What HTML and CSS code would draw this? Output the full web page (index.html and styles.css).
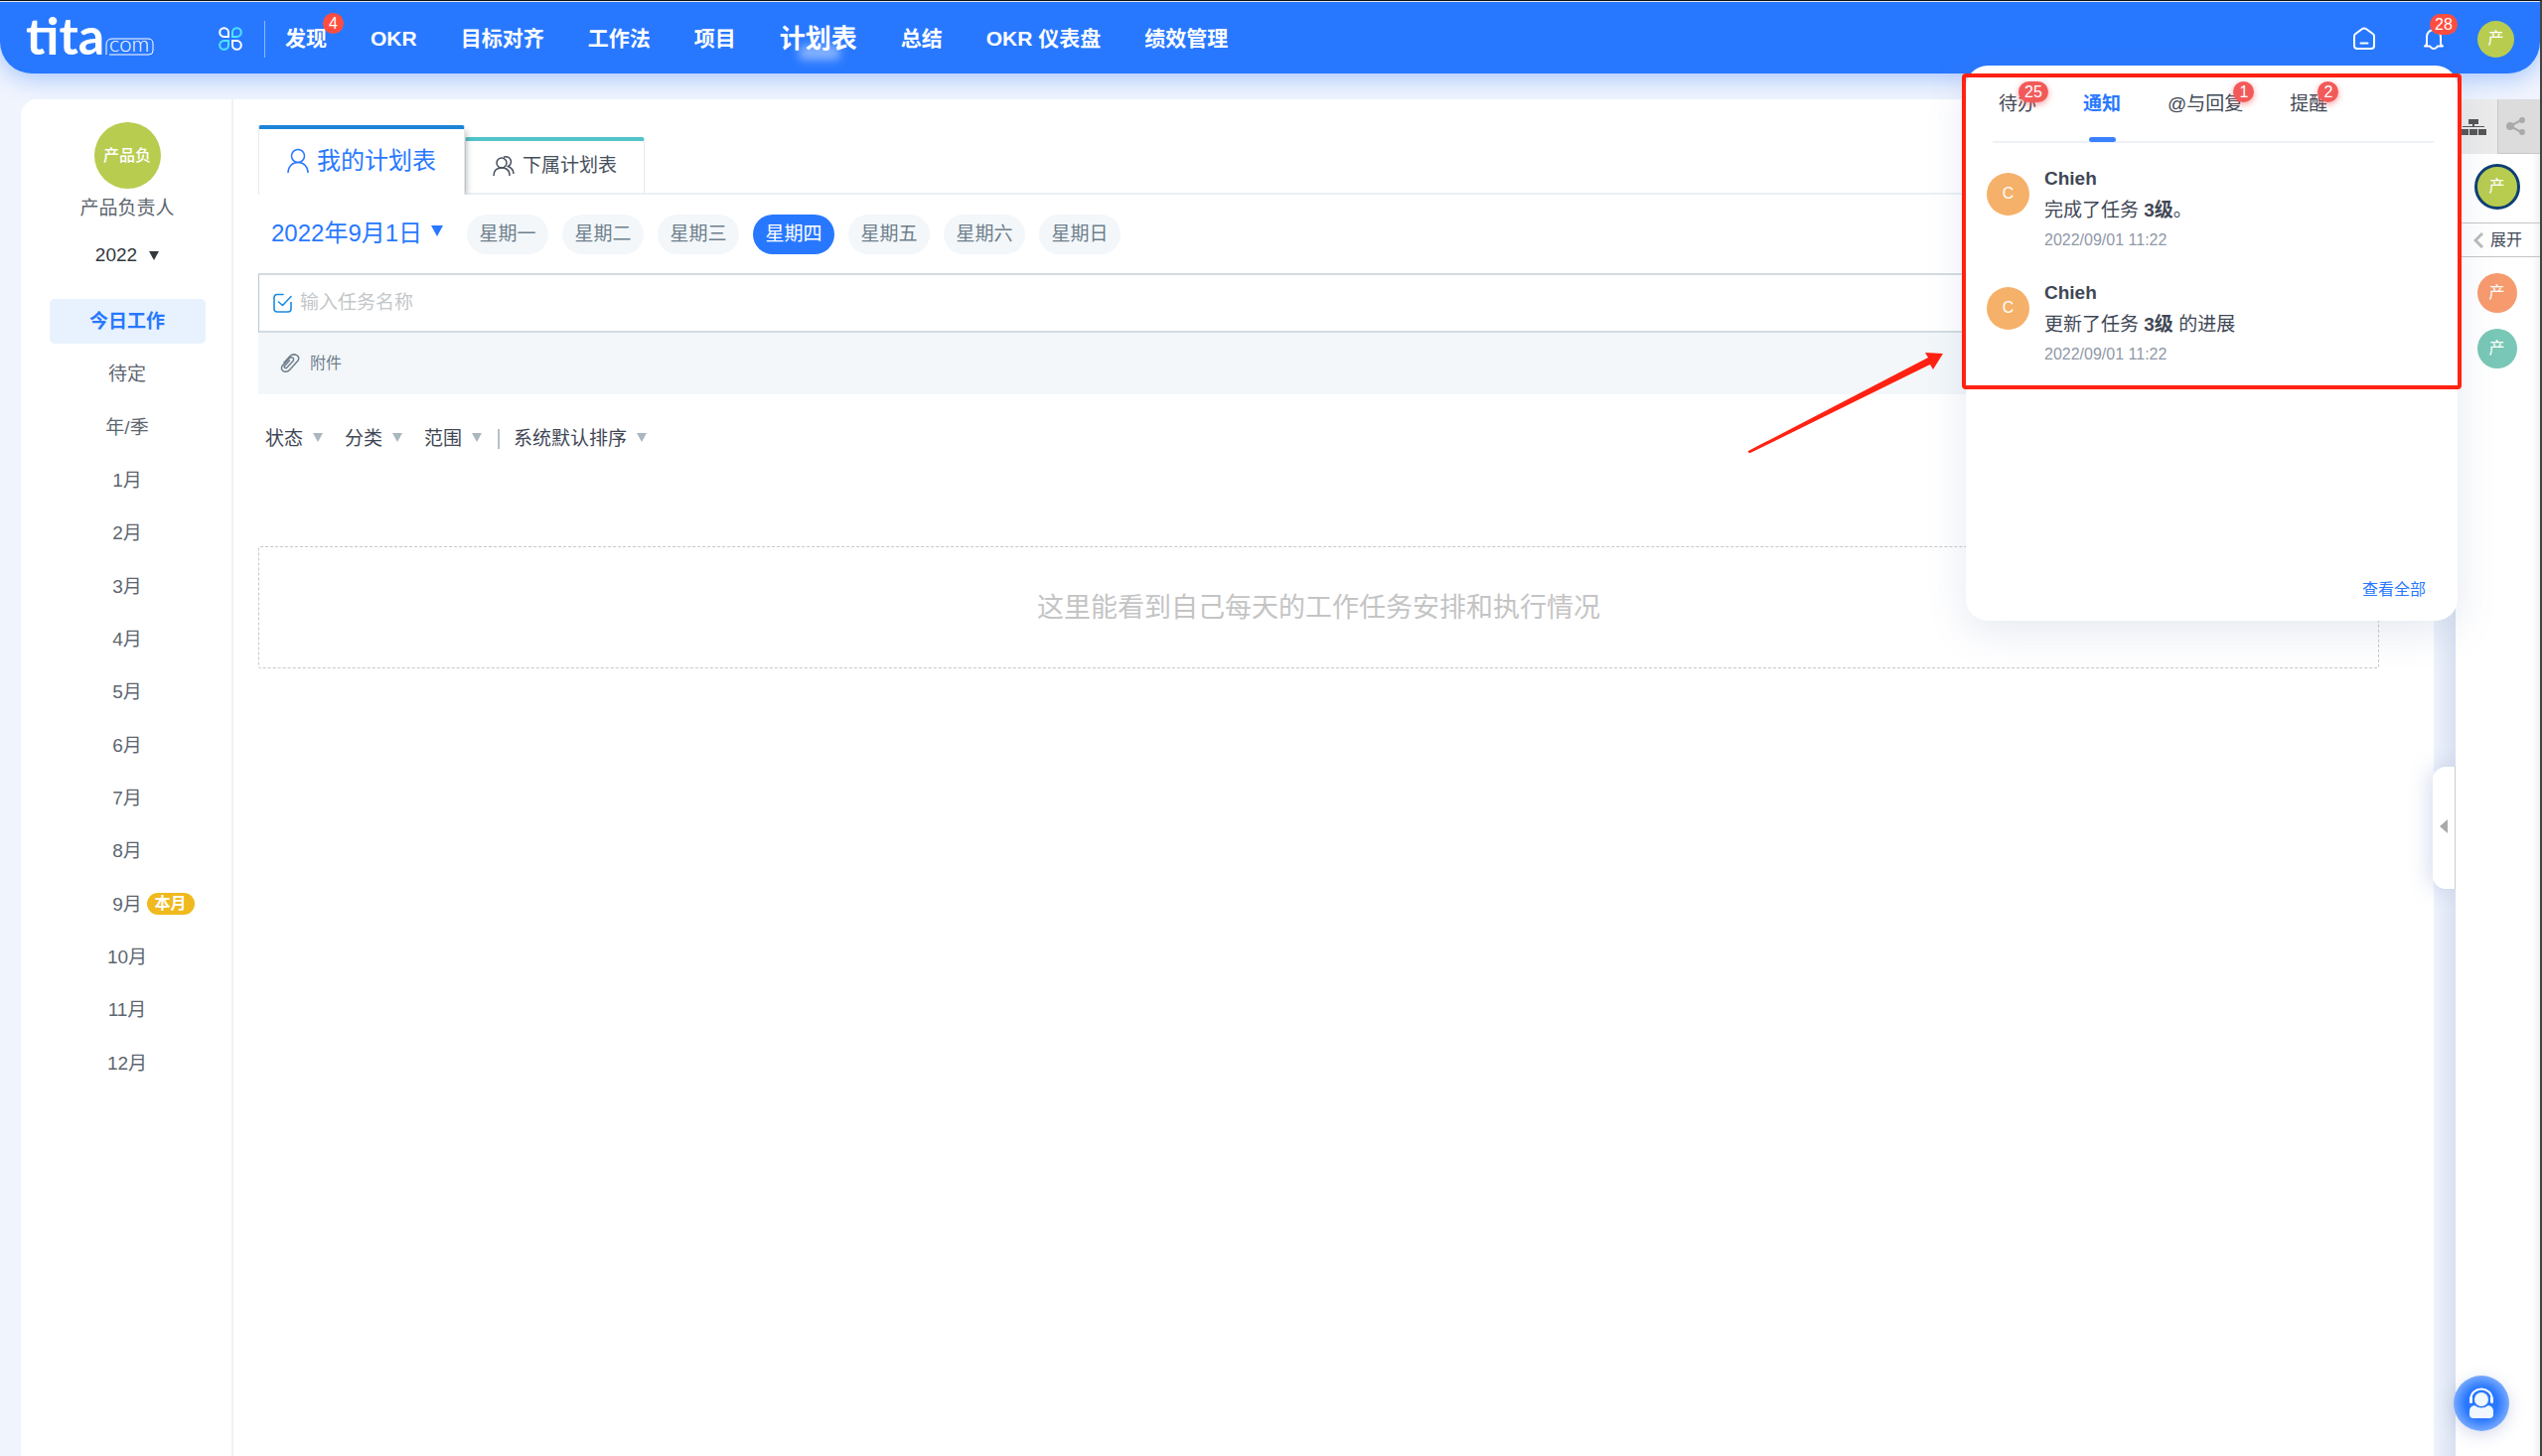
FILE: index.html
```html
<!DOCTYPE html>
<html lang="zh-CN">
<head>
<meta charset="utf-8">
<title>计划表 - Tita</title>
<link rel="stylesheet" href="styles.css">
</head>
<body>
<header class="topbar">
  <a class="logo" href="#" aria-label="tita.com">
    <svg width="132" height="60" viewBox="0 0 132 60">
      <text x="0" y="46" class="logo-main">tita</text>
      <path d="M81 46V36q0-6 6-6h36q5 0 5 5v7q0 4-4 4H84" fill="none" stroke="#fff" stroke-width="1"/>
      <text x="84" y="43" class="logo-com">com</text>
    </svg>
  </a>
  <button class="apps" aria-label="应用">
    <svg width="24" height="24" viewBox="0 0 24 24" fill="none" stroke-width="2">
      <path d="M10 10H5.500a4.400 4.400 0 1 1 4.500-4.500z" stroke="#fff"/>
      <path d="M14 10h4.500a4.400 4.400 0 1 0-4.500-4.500z" stroke="#4fe3ff"/>
      <path d="M10 14H5.500a4.400 4.400 0 1 0 4.500 4.500z" stroke="#4fe3ff"/>
      <path d="M14 14h4.500a4.400 4.400 0 1 1-4.500 4.500z" stroke="#fff"/>
    </svg>
  </button>
  <nav class="mainnav">
    <a href="#">发现<span class="badge">4</span></a>
    <a href="#">OKR</a>
    <a href="#">目标对齐</a>
    <a href="#">工作法</a>
    <a href="#">项目</a>
    <a href="#" class="current">计划表</a>
    <a href="#">总结</a>
    <a href="#">OKR 仪表盘</a>
    <a href="#">绩效管理</a>
  </nav>
  <div class="tools">
    <button aria-label="主页">
      <svg width="24" height="24" viewBox="0 0 24 24" fill="none" stroke="#fff" stroke-width="2" stroke-linecap="round" stroke-linejoin="round"><path d="M2 9.500Q2 8 3 7.200L10.500 1.800Q12 1 13.500 1.800L21 7.200Q22 8 22 9.500V19q0 3-3 3H5q-3 0-3-3zM8.500 16.500h7"/></svg>
    </button>
    <button aria-label="消息">
      <svg width="24" height="24" viewBox="0 0 24 24" fill="none" stroke="#fff" stroke-width="2" stroke-linecap="round" stroke-linejoin="round"><path d="M5 19V10a7 7 0 0 1 14 0v6q0 3 2 3.500h-5l-1.500 1.500q-2.500 2-5 0L8 19.500H3q2-.500 2-3.500"/></svg>
      <span class="badge">28</span>
    </button>
    <span class="avatar green">产</span>
  </div>
</header>

<div class="page">
  <aside class="side">
    <span class="avatar green large">产品负</span>
    <p class="username">产品负责人</p>
    <button class="year">2022<i class="tri"></i></button>
    <ul class="periods">
      <li><a class="today" href="#">今日工作</a></li>
      <li><a href="#">待定</a></li>
      <li><a href="#">年/季</a></li>
      <li><a href="#">1月</a></li>
      <li><a href="#">2月</a></li>
      <li><a href="#">3月</a></li>
      <li><a href="#">4月</a></li>
      <li><a href="#">5月</a></li>
      <li><a href="#">6月</a></li>
      <li><a href="#">7月</a></li>
      <li><a href="#">8月</a></li>
      <li><a href="#">9月<span class="now">本月</span></a></li>
      <li><a href="#">10月</a></li>
      <li><a href="#">11月</a></li>
      <li><a href="#">12月</a></li>
    </ul>
  </aside>

  <main class="main">
    <div class="tabs">
      <button class="tab active">
        <svg width="22" height="26" viewBox="0 0 22 26" fill="none" stroke="currentColor" stroke-width="1.500"><circle cx="11" cy="8" r="6.500"/><path d="M1 25c0-6 4-10.500 10-10.500S21 19 21 25"/></svg>
        我的计划表
      </button>
      <button class="tab">
        <svg width="22" height="22" viewBox="0 0 22 22" fill="none" stroke="currentColor" stroke-width="1.500"><circle cx="9" cy="8" r="5"/><path d="M1 21c0-5 3-8 8-8s8 3 8 8M11 2.200a5 5 0 1 1 4.500 9.300c3.500 1.500 5.500 4 5.500 7.500"/></svg>
        下属计划表
      </button>
    </div>
    <div class="dates">
      <button class="date">2022年9月1日<i class="tri"></i></button>
      <div class="days">
        <button>星期一</button>
        <button>星期二</button>
        <button>星期三</button>
        <button class="on">星期四</button>
        <button>星期五</button>
        <button>星期六</button>
        <button>星期日</button>
      </div>
    </div>
    <div class="newtask">
      <label class="taskfield">
        <svg width="20" height="20" viewBox="0 0 20 20" fill="none" stroke="#1c8be0" stroke-width="1.600" stroke-linecap="round" stroke-linejoin="round"><path d="M10 1.500H4Q1 1.500 1 4.500V16q0 3 3 3h11q3 0 3-3V9.500M5.500 9l4 3.500L18 3.500"/></svg>
        <input type="text" placeholder="输入任务名称" aria-label="输入任务名称">
      </label>
      <button class="attach">
        <svg width="20" height="20" viewBox="0 0 20 20" fill="none" stroke="currentColor" stroke-width="1.500" stroke-linecap="round"><path d="M4 9l6-6.500c4-3.500 11-.500 8 4.500l-8 9c-4 4.500-10.500 1.500-8-3.500l7-7.500c2.500-2.500 6-.500 4 2.500l-6 6.500c-1.500 1.500-3.500 0-2.500-1.500l5-5.500"/></svg>
        附件
      </button>
    </div>
    <div class="filters">
      <button>状态<i class="tri"></i></button>
      <button>分类<i class="tri"></i></button>
      <button>范围<i class="tri"></i></button>
      <span class="bar"></span>
      <button>系统默认排序<i class="tri"></i></button>
    </div>
    <p class="empty">这里能看到自己每天的工作任务安排和执行情况</p>
  </main>

  <div class="gutter"><button class="handle" aria-label="展开面板"><i class="tri"></i></button></div>

  <aside class="people">
    <div class="switch">
      <button aria-label="组织架构">
        <svg width="26" height="18" viewBox="0 0 26 18" fill="#555"><path d="M8 1h10v5h-4v2h10v1H2V8h10V6H8zM0 11h8v6H0zM9 11h8v6H9zM18 11h8v6h-8z"/></svg>
      </button>
      <button class="off" aria-label="分享">
        <svg width="20" height="20" viewBox="0 0 20 20" fill="#aaa" stroke="#aaa" stroke-width="2"><path d="M4 10l11-6M4 10l11 6" fill="none"/><circle cx="4" cy="10" r="3"/><circle cx="16" cy="4" r="2"/><circle cx="16" cy="16" r="2"/></svg>
      </button>
    </div>
    <span class="avatar green ring">产</span>
    <button class="expand">
      <svg width="10" height="16" viewBox="0 0 10 16" fill="none" stroke="#bbb" stroke-width="3"><path d="M9 1L2 8l7 7"/></svg>
      展开
    </button>
    <span class="avatar orange">产</span>
    <span class="avatar teal">产</span>
  </aside>
</div>

<section class="popup" aria-label="通知">
  <div class="poptabs">
    <button>待办<span class="badge wide">25</span></button>
    <button class="on">通知</button>
    <button>@与回复<span class="badge">1</span></button>
    <button>提醒<span class="badge">2</span></button>
  </div>
  <article class="notice">
    <span class="avatar amber">C</span>
    <div>
      <h3>Chieh</h3>
      <p>完成了任务 <b>3级</b>。</p>
      <time>2022/09/01 11:22</time>
    </div>
  </article>
  <article class="notice">
    <span class="avatar amber">C</span>
    <div>
      <h3>Chieh</h3>
      <p>更新了任务 <b>3级</b> 的进展</p>
      <time>2022/09/01 11:22</time>
    </div>
  </article>
  <a class="all" href="#">查看全部</a>
  <div class="frame"></div>
  <svg class="arrow" width="200" height="104" viewBox="0 0 200 104"><path d="M1 101L182 7l-3-5 18 1-10 16-3-5L3 103Q0 103 1 101z" fill="#ff2212"/></svg>
</section>

<button class="support" aria-label="在线客服">
  <svg width="26" height="32" viewBox="0 0 26 32" fill="#f1f7ff"><circle cx="13" cy="12" r="7"/><path d="M6 18q7 5 14 0 5 1 5 6v3q0 4-4 4H5q-4 0-4-4v-3q0-5 5-6z"/><path d="M2.500 11a10.500 9.500 0 0 1 21 0" fill="none" stroke="#fff" stroke-width="2"/><rect x="1" y="9" width="3" height="7" rx="1.500"/><rect x="22" y="9" width="3" height="7" rx="1.500"/></svg>
</button>
</body>
</html>
```
FILE: styles.css
```css
* { box-sizing: border-box; }
body {
  margin: 0;
  min-height: 100vh;
  display: flex;
  flex-direction: column;
  position: relative;
  background: #f0f4fd;
  border-top: 1px solid #111;
  border-right: 2px solid #444;
  font: 19px/28px "Liberation Sans", "Noto Sans CJK SC", sans-serif;
  color: #3f4755;
}
button {
  display: flex;
  align-items: center;
  border: 0;
  padding: 0;
  background: none;
  font: inherit;
  color: inherit;
  white-space: nowrap;
}
a { color: inherit; text-decoration: none; }
p, h3, ul { margin: 0; padding: 0; }
svg { display: block; flex: none; }

.tri {
  border: 5px solid transparent;
  border-top: 9px solid currentColor;
  border-bottom: 0;
}
.avatar {
  display: flex;
  align-items: center;
  justify-content: center;
  flex: none;
  width: 40px;
  height: 40px;
  border-radius: 50%;
  color: #fff;
  font-size: 16px;
}
.green { background: #b8cc50; }
.orange { background: #f79b6e; }
.teal { background: #79c7b6; }
.amber { background: #f5b169; width: 43px; height: 43px; }
.badge {
  position: absolute;
  min-width: 21px;
  height: 21px;
  padding: 0 5px;
  border-radius: 11px;
  background: #ff4d40;
  color: #fff;
  font-size: 16px;
  font-weight: 400;
  line-height: 21px;
  text-align: center;
}

/* top bar */
.topbar {
  display: flex;
  align-items: center;
  height: 73px;
  padding: 2px 26px 0;
  border-top: 1px solid #dfe6f5;
  border-radius: 0 0 32px 32px;
  background: #2878ff;
  box-shadow: 0 4px 24px rgba(40, 120, 255, .4);
}
.logo-main { font: 700 52px Lato, sans-serif; fill: #fff; }
.logo-com { font: 300 22px Lato, sans-serif; fill: #fff; }
.apps { margin-left: 62px; }
.mainnav {
  display: flex;
  align-items: center;
  gap: 44px;
  margin-left: 22px;
  padding-left: 20px;
  height: 37px;
  border-left: 1px solid #8db8ff;
  color: #fff;
  font-size: 21px;
  font-weight: 700;
  white-space: nowrap;
}
.mainnav a { position: relative; }
.mainnav .badge { left: 38px; top: -12px; }
.mainnav .current { font-size: 26px; }
.mainnav .current::after {
  content: "";
  position: absolute;
  left: 20px;
  right: 18px;
  bottom: -7px;
  height: 14px;
  background: rgba(255, 255, 255, .45);
  filter: blur(5px);
}
.tools {
  display: flex;
  align-items: center;
  gap: 46px;
  margin-left: auto;
}
.tools button { position: relative; }
.tools .badge { left: 8px; top: -13px; }
.tools .avatar { width: 37px; height: 37px; margin-left: -14px; }

/* page columns */
.page {
  display: flex;
  flex: 1;
  padding: 26px 0 0 21px;
}
.side {
  display: flex;
  flex-direction: column;
  align-items: center;
  width: 214px;
  padding: 23px 0 0 2px;
  background: #fff;
  border-right: 2px solid #eff1f3;
  border-radius: 16px 0 0 0;
  color: #5d6670;
}
.large { width: 67px; height: 67px; font-weight: 500; }
.username { margin-top: 6px; }
.year { gap: 12px; margin-top: 19px; color: #33383d; }
.periods {
  display: grid;
  grid-auto-rows: 1fr;
  align-items: center;
  width: 157px;
  height: 800px;
  margin-top: 26px;
  list-style: none;
}
.periods a {
  display: block;
  position: relative;
  height: 45px;
  border-radius: 5px;
  line-height: 45px;
  text-align: center;
}
.periods .today { background: #e8f2fe; color: #2878ff; font-weight: 700; }
.now {
  position: absolute;
  left: 98px;
  top: 11px;
  width: 48px;
  height: 22px;
  border-radius: 11px;
  background: #f0b91d;
  color: #fff;
  font-size: 16px;
  font-weight: 700;
  line-height: 22px;
}
.main {
  flex: 1;
  padding: 26px 55px 0 25px;
  background: #fff;
}
.tabs {
  display: flex;
  align-items: flex-end;
  height: 70px;
  border-bottom: 2px solid #eaf0f4;
}
.tab {
  height: 56px;
  padding: 0 27px 2px;
  gap: 8px;
  border: 1px solid #e2eaef;
  border-top: 4px solid #50c4c8;
  border-bottom: 0;
  border-radius: 3px 3px 0 0;
  color: #46505c;
}
.tab.active {
  height: 70px;
  margin-bottom: -2px;
  padding: 0 28px 3px;
  border-top-color: #1c84d8;
  background: #fff;
  box-shadow: 5px 3px 6px -3px rgba(0, 0, 0, .25);
  clip-path: inset(0 -12px 0 0);
  color: #2878ff;
  font-size: 24px;
}
.dates {
  display: flex;
  align-items: center;
  margin-top: 20px;
  padding-left: 13px;
}
.date { gap: 9px; padding-bottom: 2px; color: #2878ff; font-size: 24px; }
.date .tri { border-width: 11px 6px 0; margin-top: -6px; }
.days { display: flex; gap: 14px; margin-left: 24px; }
.days button {
  justify-content: center;
  width: 82px;
  height: 40px;
  border-radius: 20px;
  background: #f3f7fa;
  color: #6f7f8c;
}
.days .on { background: #2878ff; color: #fff; }
.newtask { margin-top: 19px; background: #f3f7fa; }
.taskfield {
  display: flex;
  align-items: center;
  gap: 7px;
  height: 60px;
  padding-left: 14px;
  border: 2px solid #d3dce0;
  border-left: 1px solid #b9c6ce;
  background: #fff;
}
.taskfield input {
  flex: 1;
  border: 0;
  padding: 0;
  outline: 0;
  background: none;
  font: inherit;
}
.taskfield input::placeholder { color: #c4c7ca; opacity: 1; }
.attach {
  gap: 10px;
  height: 62px;
  padding-left: 22px;
  color: #6f7f8c;
  font-size: 16px;
}
.filters {
  display: flex;
  align-items: center;
  gap: 22px;
  margin: 31px 0 0 7px;
}
.filters button { gap: 10px; }
.filters .tri { color: #a9b7be; margin-top: -4px; }
.filters .bar { width: 2px; height: 20px; margin: 0 -8px 0 -6px; background: #b5c1c8; }
.empty {
  margin-top: 94px;
  padding: 47px 0 46px;
  border: 1px dashed #c8c8c8;
  border-radius: 2px;
  color: #c4c4c4;
  font-size: 27px;
  text-align: center;
}
.gutter {
  display: flex;
  flex-direction: column;
  width: 22px;
  background: linear-gradient(90deg, #eef3fc, #d9e1f0);
}
.handle {
  justify-content: center;
  width: 23px;
  height: 123px;
  margin: 672px 0 0 -1px;
  padding-bottom: 3px;
  border-radius: 13px 0 0 13px;
  border-right: 1px solid #ccc;
  background: #fff;
  box-shadow: -4px 0 20px rgba(90, 120, 190, .25);
}
.handle .tri {
  border: 7px solid transparent;
  border-left: 0;
  border-right: 8px solid #aaa;
}
.people {
  display: flex;
  flex-direction: column;
  align-items: center;
  width: 85px;
  background: linear-gradient(270deg, #f0f0f0, #fff 8px);
}
.switch { display: flex; width: 100%; height: 55px; }
.switch button { flex: 1; justify-content: center; padding-right: 6px; background: #ebebeb; }
.switch .off { background: #dcdcdc; border: 1px solid #c8c8c8; border-width: 0 0 1px 1px; }
.people .avatar { margin-right: 2px; }
.people .ring {
  width: 46px;
  height: 46px;
  margin-top: 10px;
  margin-bottom: 13px;
  border: 3px solid #0d3f73;
}
.expand {
  justify-content: center;
  gap: 7px;
  width: 100%;
  height: 35px;
  border: 1px solid #c5c5c5;
  border-width: 1px 0;
  font-size: 16px;
}
.orange, .teal { margin-top: 16px; }

/* notification popup */
.popup {
  position: absolute;
  top: 65px;
  right: 83px;
  display: flex;
  flex-direction: column;
  width: 495px;
  height: 559px;
  padding: 0 24px 17px 21px;
  border-radius: 22px;
  background: #fff;
  box-shadow: 0 10px 40px rgba(90, 110, 170, .16);
}
.poptabs {
  display: flex;
  gap: 47px;
  height: 78px;
  margin: 0 0 7px 6px;
  padding: 0 6px;
  border-bottom: 2px solid #eef1f8;
}
.poptabs button { position: relative; height: 78px; }
.poptabs .on { color: #2878ff; font-weight: 700; }
.poptabs .on::after {
  content: "";
  position: absolute;
  left: 6px;
  right: 5px;
  bottom: 1px;
  height: 5px;
  border-radius: 3px;
  background: #3a80ff;
}
.poptabs .badge {
  left: calc(100% - 10px);
  top: 16px;
  padding: 0 6px;
  background: #f25a5a;
  box-shadow: 0 2px 6px rgba(242, 90, 90, .6);
}
.poptabs .wide { left: calc(100% - 18px); }
.notice { display: flex; align-items: center; gap: 15px; height: 115px; }
.notice .avatar { margin-bottom: 27px; }
.notice h3 { font-size: 19px; line-height: 33px; }
.notice p { line-height: 32px; }
.notice time { display: block; font-size: 16px; line-height: 27px; color: #9098a8; }
.all { margin: auto 8px 0 auto; color: #2878ff; font-size: 16px; }
.frame {
  position: absolute;
  top: 8px;
  left: -4px;
  right: -4px;
  height: 318px;
  border: 4px solid #ff2212;
  border-radius: 4px;
}
.arrow { position: absolute; left: -220px; top: 287px; }
.support {
  position: fixed;
  right: 33px;
  bottom: 25px;
  justify-content: center;
  width: 56px;
  height: 56px;
  border-radius: 50%;
  background: radial-gradient(#2878ff 40%, #7aabff 72%);
  box-shadow: 0 4px 16px rgba(90, 110, 170, .25);
}
```
